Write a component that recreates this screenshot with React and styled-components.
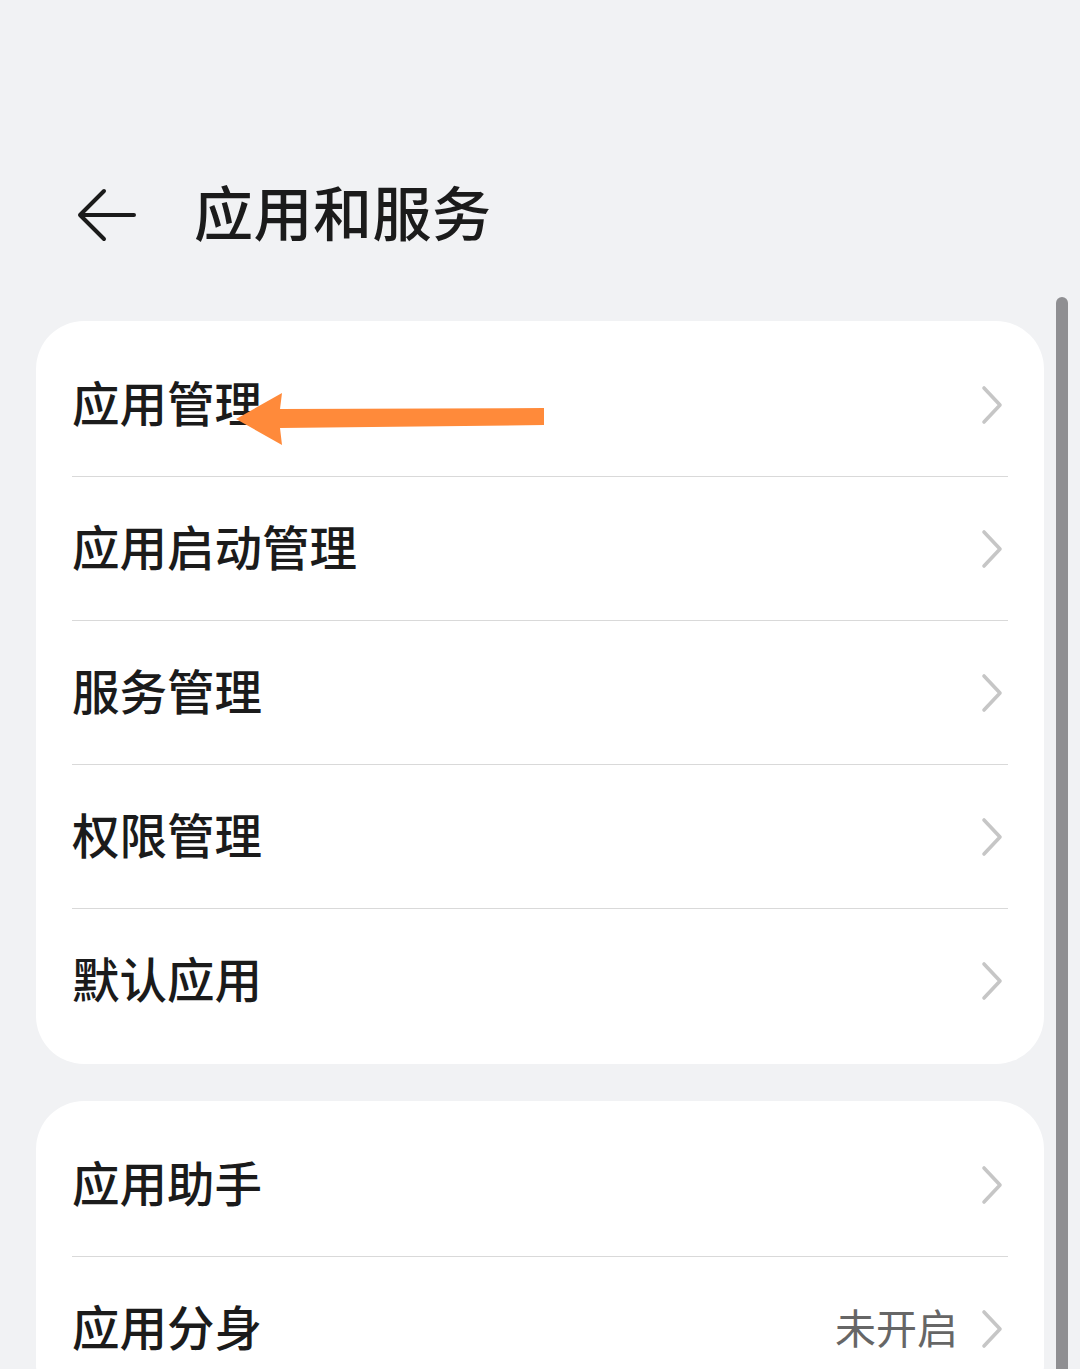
import React from "react";
import styled, { createGlobalStyle } from "styled-components";

const Global = createGlobalStyle`
  html, body { margin: 0; padding: 0; background: #f1f2f4; overflow: hidden; }
  body { font-family: "Noto Sans CJK SC", "Noto Sans", sans-serif; }
`;

const Page = styled.div`
  position: relative;
  width: 1080px;
  height: 1369px;
  overflow: hidden;
  background: #f1f2f4;
  box-sizing: border-box;
  padding-top: 170px;
`;

const Header = styled.div`
  display: flex;
  align-items: center;
  height: 90px;
  padding-left: 76px;
  gap: 54px;
  margin-bottom: 61px;
`;

const BackBtn = styled.div`
  width: 64px;
  height: 56px;
  display: flex;
  align-items: center;
`;

const Title = styled.h1`
  margin: 0;
  padding-bottom: 10px;
  font-size: 59px;
  font-weight: 500;
  color: #1b1b1b;
  letter-spacing: 0.5px;
`;

const Card = styled.div`
  margin: 0 36px ${(p) => p.$mb || 0}px;
  background: #fff;
  border-radius: 48px;
  padding: 12px 0 11px;
`;

const Row = styled.div`
  position: relative;
  height: 144px;
  display: flex;
  align-items: center;
  padding: 0 40px 0 36px;
  box-sizing: border-box;
  &:not(:last-child)::after {
    content: "";
    position: absolute;
    left: 36px;
    right: 36px;
    bottom: 0;
    height: 1px;
    background: #d9d9d9;
  }
`;

const Label = styled.span`
  flex: 1;
  padding-bottom: 8px;
  font-size: 47.5px;
  font-weight: 500;
  color: #1b1b1b;
`;

const Value = styled.span`
  padding-bottom: 6px;
  font-size: 41px;
  color: #666;
  margin-right: 22px;
`;

const Scrollbar = styled.div`
  position: absolute;
  left: 1056px;
  top: 297px;
  width: 12px;
  height: 1200px;
  border-radius: 6px;
  background: #8f8f92;
`;

const Annot = styled.svg`
  position: absolute;
  left: 230px;
  top: 388px;
`;

const Chevron = () => (
  <svg width="24" height="40" viewBox="0 0 24 40">
    <path d="M4 3 L20 20 L4 37" fill="none" stroke="#c6c6c6" strokeWidth="3.6" strokeLinecap="round" strokeLinejoin="round" />
  </svg>
);

const Item = ({ label, value }) => (
  <Row>
    <Label>{label}</Label>
    {value && <Value>{value}</Value>}
    <Chevron />
  </Row>
);

export default function App() {
  return (
    <>
      <Global />
      <Page>
        <Header>
          <BackBtn>
            <svg width="62" height="54" viewBox="0 0 62 54">
              <path d="M28 3 L4 27 L28 51 M4 27 L58 27" fill="none" stroke="#1b1b1b" strokeWidth="4" strokeLinecap="round" strokeLinejoin="round" />
            </svg>
          </BackBtn>
          <Title>应用和服务</Title>
        </Header>
        <Card $mb={37}>
          <Item label="应用管理" />
          <Item label="应用启动管理" />
          <Item label="服务管理" />
          <Item label="权限管理" />
          <Item label="默认应用" />
        </Card>
        <Card>
          <Item label="应用助手" />
          <Item label="应用分身" value="未开启" />
        </Card>
        <Scrollbar />
        <Annot width="320" height="62" viewBox="0 0 320 62">
          <path d="M6 31 L52 5 L50 21 L314 20 L314 37 L50 40 L52 57 Z" fill="#ff8a3a" />
        </Annot>
      </Page>
    </>
  );
}
